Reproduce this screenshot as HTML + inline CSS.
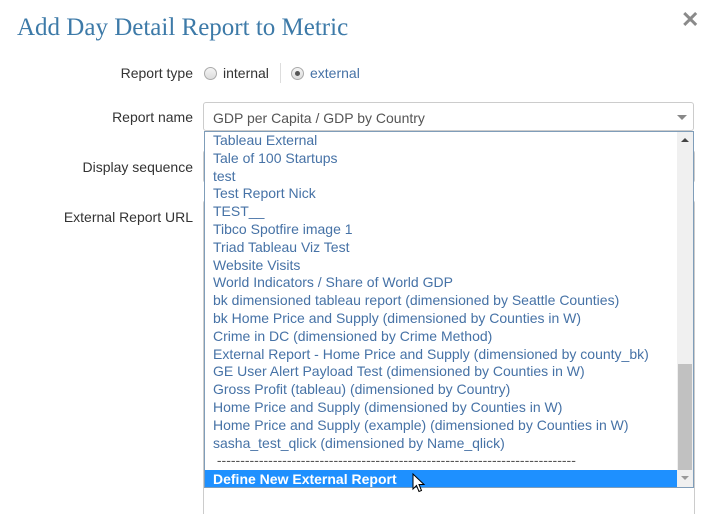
<!DOCTYPE html>
<html><head><style>
*{margin:0;padding:0;box-sizing:border-box}
html,body{width:713px;height:514px;overflow:hidden}
body{background:#fff;font-family:"Liberation Sans",Arial,sans-serif;position:relative;color:#333}
.t{position:absolute;left:17px;top:14px;font-family:"Liberation Serif",serif;font-size:25px;color:#3d7aa8}
.x{position:absolute;left:681px;top:7px;font-size:22px;color:#8a8a8a;font-weight:bold}
.l{position:absolute;font-size:14px;color:#333;text-align:right;width:180px;left:13px}
.r{position:absolute;width:13px;height:13px;border-radius:50%;border:1px solid #aaa;background:linear-gradient(#f4f4f4,#ddd)}
.sel{position:absolute;left:203px;top:102px;width:491px;height:29px;border:1px solid #ccc;border-radius:3px;font-size:14px;color:#555;padding:7px 9px}
.box{position:absolute;left:204px;top:131px;width:490px;height:357px;border:1px solid #7f9db9;background:#fff;overflow:hidden}
.it{height:17.8px;font-size:14px;line-height:17.8px;color:#4672a6;padding-left:8px;white-space:nowrap}
.sb{position:absolute;right:0;top:0;width:16px;height:355px;background:#f0f0f0}
.th{position:absolute;left:1px;width:14px;top:232px;height:106px;background:#c1c1c1}
.hl{position:absolute;left:0;top:338px;width:472px;height:18px;background:#1e90ff;color:#fff;font-weight:bold;font-size:14px;line-height:18px;padding-left:8px}
.bg{position:absolute;border:1px solid #ccc;border-radius:3px}
</style></head><body>
<div class="t">Add Day Detail Report to Metric</div>
<div class="x">✕</div>
<div class="l" style="top:65px">Report type</div>
<div class="r" style="left:204px;top:67px"></div>
<div style="position:absolute;left:223px;top:65px;font-size:14px;color:#333">internal</div>
<div style="position:absolute;left:280px;top:63px;width:1px;height:20px;background:#ddd"></div>
<div class="r" style="left:291px;top:67px"><div style="width:5px;height:5px;border-radius:50%;background:#555;margin:3px"></div></div>
<div style="position:absolute;left:310px;top:65px;font-size:14px;color:#4672a6">external</div>
<div class="l" style="top:109px">Report name</div>
<div class="sel">GDP per Capita / GDP by Country<span style="position:absolute;right:6px;top:12px;border-left:5px solid transparent;border-right:5px solid transparent;border-top:5px solid #888"></span></div>
<div class="l" style="top:159px">Display sequence</div>
<div class="l" style="top:209px">External Report URL</div>
<div class="bg" style="left:203px;top:150px;width:492px;height:33px"></div>
<div class="bg" style="left:203px;top:200px;width:492px;height:314px;border-bottom:none;border-radius:3px 3px 0 0"></div>
<div class="box">
<div class="it">Tableau External</div>
<div class="it">Tale of 100 Startups</div>
<div class="it">test</div>
<div class="it">Test Report Nick</div>
<div class="it">TEST__</div>
<div class="it">Tibco Spotfire image 1</div>
<div class="it">Triad Tableau Viz Test</div>
<div class="it">Website Visits</div>
<div class="it">World Indicators / Share of World GDP</div>
<div class="it">bk dimensioned tableau report (dimensioned by Seattle Counties)</div>
<div class="it">bk Home Price and Supply (dimensioned by Counties in W)</div>
<div class="it">Crime in DC (dimensioned by Crime Method)</div>
<div class="it">External Report - Home Price and Supply (dimensioned by county_bk)</div>
<div class="it">GE User Alert Payload Test (dimensioned by Counties in W)</div>
<div class="it">Gross Profit (tableau) (dimensioned by Country)</div>
<div class="it">Home Price and Supply (dimensioned by Counties in W)</div>
<div class="it">Home Price and Supply (example) (dimensioned by Counties in W)</div>
<div class="it">sasha_test_qlick (dimensioned by Name_qlick)</div>
<div class="it" style="color:#555;font-size:14px">&nbsp;-----------------------------------------------------------------------------</div>
<div class="hl">Define New External Report</div>
<div class="sb"><div style="position:absolute;left:4px;top:6px;border-left:4px solid transparent;border-right:4px solid transparent;border-bottom:4px solid #444"></div><div class="th"></div><div style="position:absolute;left:4px;top:344px;border-left:4px solid transparent;border-right:4px solid transparent;border-top:4px solid #999"></div></div>
</div>
<svg style="position:absolute;left:412px;top:473px" width="14" height="21" viewBox="0 0 14 21"><path d="M1 1 L1 16 L4.5 12.5 L7 18.5 L9.5 17.5 L7 11.5 L12 11.5 Z" fill="#fff" stroke="#000" stroke-width="1"/></svg>
</body></html>
